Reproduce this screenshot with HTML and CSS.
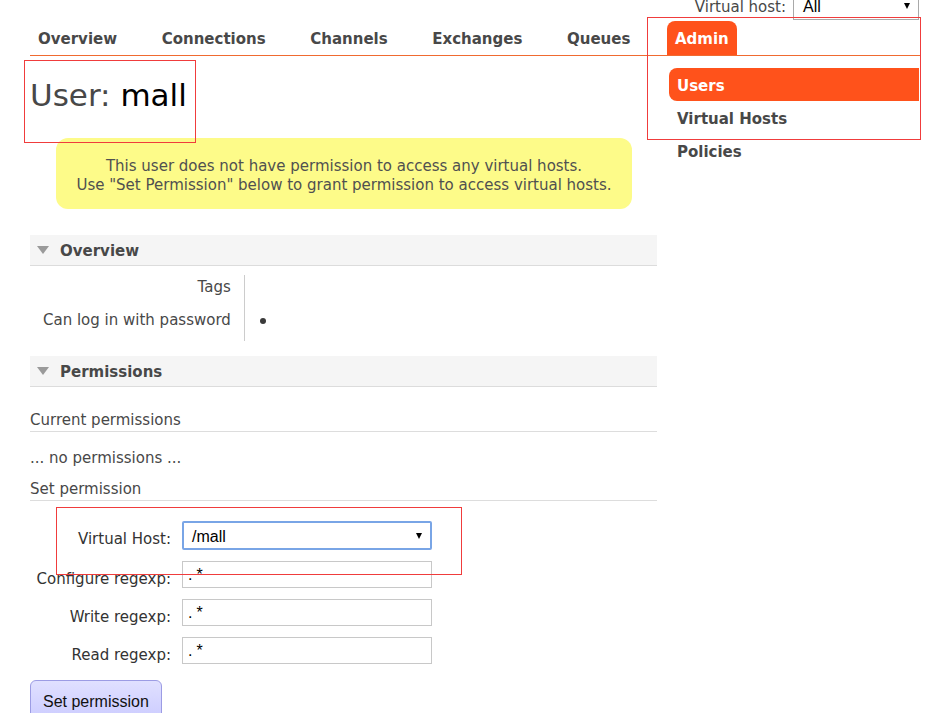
FILE: index.html
```html
<!DOCTYPE html>
<html lang="en">
<head>
<meta charset="utf-8">
<title>RabbitMQ Management - User: mall</title>
<link rel="stylesheet" href="styles.css">
</head>
<body>
<header class="topbar">
  <span class="vh-label">Virtual host:</span>
  <div class="vh-select"><span>All</span><span class="arrow"></span></div>
</header>
<nav class="nav">
  <ul>
    <li>Overview</li>
    <li>Connections</li>
    <li>Channels</li>
    <li>Exchanges</li>
    <li>Queues</li>
    <li class="active">Admin</li>
  </ul>
</nav>
<div class="page">
  <main class="main">
    <h1>User: <b>mall</b></h1>
    <div class="warning">
      <p>This user does not have permission to access any virtual hosts.</p>
      <p>Use "Set Permission" below to grant permission to access virtual hosts.</p>
    </div>

    <h2 class="section"><span class="tri"></span>Overview</h2>
    <table class="facts">
      <tr><th>Tags</th><td></td></tr>
      <tr><th>Can log in with password</th><td><span class="dot"></span></td></tr>
    </table>

    <h2 class="section perms"><span class="tri"></span>Permissions</h2>
    <h3 class="sub first">Current permissions</h3>
    <p class="none">... no permissions ...</p>
    <h3 class="sub">Set permission</h3>
    <form class="form">
      <label>Virtual Host:</label>
      <div class="select"><span>/mall</span><span class="arrow"></span></div>
      <label>Configure regexp:</label>
      <input class="text" type="text" value=".*">
      <label>Write regexp:</label>
      <input class="text" type="text" value=".*">
      <label>Read regexp:</label>
      <input class="text" type="text" value=".*">
    </form>
    <button class="btn" type="button">Set permission</button>
  </main>
  <aside class="menu">
    <ul>
      <li class="selected">Users</li>
      <li>Virtual Hosts</li>
      <li>Policies</li>
    </ul>
  </aside>
</div>

<div class="mark mark-menu"></div>
<div class="mark mark-title"></div>
<div class="mark mark-vhost"></div>
</body>
</html>
```
FILE: styles.css
```css
html, body {
  margin: 0;
  padding: 0;
  background: #fff;
}
body {
  font-family: "DejaVu Sans", Verdana, sans-serif;
  font-size: 15px;
  line-height: 19px;
  color: #484848;
  width: 946px;
  height: 713px;
  overflow: hidden;
}

/* top bar */
.topbar {
  height: 21px;
  display: flex;
  justify-content: flex-end;
  align-items: flex-start;
  padding-right: 27px;
}
.vh-label {
  margin-top: -2px;
  margin-right: 7px;
}
.vh-select {
  position: relative;
  box-sizing: border-box;
  width: 126px;
  height: 20px;
  border: 1px solid #a9a9a9;
  border-top: none;
  padding-left: 9px;
  font-family: "Liberation Sans", Arial, sans-serif;
  font-size: 16px;
  line-height: 14px;
  color: #000;
}
.arrow {
  position: absolute;
  width: 0;
  height: 0;
  border-left: 3.5px solid transparent;
  border-right: 3.5px solid transparent;
  border-top: 6px solid #000;
}
.vh-select .arrow {
  right: 8px;
  top: 3px;
}

/* nav */
.nav {
  margin: 0 26px 0 30px;
  border-bottom: 1px solid #f06a30;
}
.nav ul {
  list-style: none;
  margin: 0;
  padding: 0 0 0 8px;
  display: flex;
  gap: 44.6px;
}
.nav li {
  font-weight: bold;
  padding: 9px 0 6px;
  line-height: 19px;
  color: #484848;
}
.nav li.active {
  background: #ff521b;
  color: #fff;
  padding: 9px 8px 6px;
  margin-left: -8px;
  border-radius: 8px 8px 0 0;
}

/* page */
.page {
  display: flex;
  align-items: flex-start;
}
.main {
  margin-left: 30px;
  width: 627px;
}
.menu {
  margin-left: 12px;
  width: 250px;
  padding-top: 12px;
}
.menu ul {
  list-style: none;
  margin: 0;
  padding: 0;
}
.menu li {
  height: 31px;
  padding-top: 2px;
  line-height: 33px;
  padding-left: 8px;
  font-weight: bold;
  color: #484848;
}
.menu li.selected {
  background: #ff521b;
  color: #fff;
  border-radius: 8px 0 0 8px;
}

h1 {
  margin: 20px 0 0;
  font-size: 31px;
  line-height: 38px;
  font-weight: normal;
  color: #484848;
}
h1 b {
  font-weight: normal;
  color: #000;
}

.warning {
  margin: 24px 25px 0 26px;
  padding: 19px 0 14px;
  background: #fdfb89;
  border-radius: 12px;
  text-align: center;
  color: #505050;
}
.warning p {
  margin: 0;
}

.section {
  margin: 26px 0 0;
  height: 28px;
  padding-top: 2px;
  background: #f5f5f5;
  border-bottom: 1px solid #dcdcdc;
  display: flex;
  align-items: center;
  padding-left: 7px;
  gap: 11px;
  font-size: 15px;
  font-weight: bold;
  color: #484848;
}
.section.perms {
  margin-top: 15px;
}
.tri {
  width: 0;
  height: 0;
  border-left: 6.5px solid transparent;
  border-right: 6.5px solid transparent;
  border-top: 8px solid #9a9a9a;
  margin-top: -2px;
}

.facts {
  margin-top: 9px;
  border-collapse: collapse;
}
.facts th, .facts td {
  padding: 3px 13px 11px;
  line-height: 19px;
  vertical-align: top;
}
.facts th {
  font-weight: normal;
  text-align: right;
  border-right: 1px solid #cccccc;
}
.facts td {
  padding-left: 15px;
}
.dot {
  display: inline-block;
  width: 6px;
  height: 6px;
  border-radius: 50%;
  background: #3a3a3a;
  vertical-align: middle;
}

.sub {
  margin: 12px 0 0;
  padding-bottom: 1px;
  font-size: 15px;
  font-weight: normal;
  border-bottom: 1px solid #dddddd;
}
.sub.first {
  margin-top: 24px;
}
.none {
  margin: 17px 0 0;
}

.form {
  margin-top: 20px;
  display: grid;
  grid-template-columns: 141px 250px;
  grid-template-rows: 29px 27px 27px 27px;
  column-gap: 11px;
  row-gap: 11px;
}
.form label {
  align-self: start;
  text-align: right;
  white-space: nowrap;
  padding-top: 9px;
  line-height: 19px;
  color: #333;
}
.select {
  position: relative;
  box-sizing: border-box;
  height: 29px;
  border: 2px solid #79a5e6;
  border-radius: 2px;
  padding: 2px 0 0 8px;
  font-family: "Liberation Sans", Arial, sans-serif;
  font-size: 16px;
  line-height: 23px;
  color: #000;
}
.select .arrow {
  right: 8px;
  top: 10px;
}
.text {
  box-sizing: border-box;
  width: 250px;
  height: 27px;
  margin: 0;
  border: 1px solid #c8c8c8;
  padding: 0 5px;
  font-family: "Liberation Sans", Arial, sans-serif;
  font-size: 16px;
  letter-spacing: 4px;
  color: #000;
  background: #fff;
  outline: none;
}

.btn {
  margin-top: 16px;
  height: 44px;
  padding: 0 12px;
  border: 1px solid #9c9ce4;
  border-radius: 6px;
  background: linear-gradient(#e0e0ff, #cacaff);
  font-family: "Liberation Sans", Arial, sans-serif;
  font-size: 16px;
  color: #111;
}

/* annotation boxes */
.mark {
  position: absolute;
  box-sizing: border-box;
  border: 1px solid #f03c3c;
  pointer-events: none;
}
.mark-menu {
  left: 647px;
  top: 17px;
  width: 274px;
  height: 123px;
}
.mark-title {
  left: 24px;
  top: 60px;
  width: 172px;
  height: 83px;
}
.mark-vhost {
  left: 56px;
  top: 507px;
  width: 406px;
  height: 68px;
}
```
